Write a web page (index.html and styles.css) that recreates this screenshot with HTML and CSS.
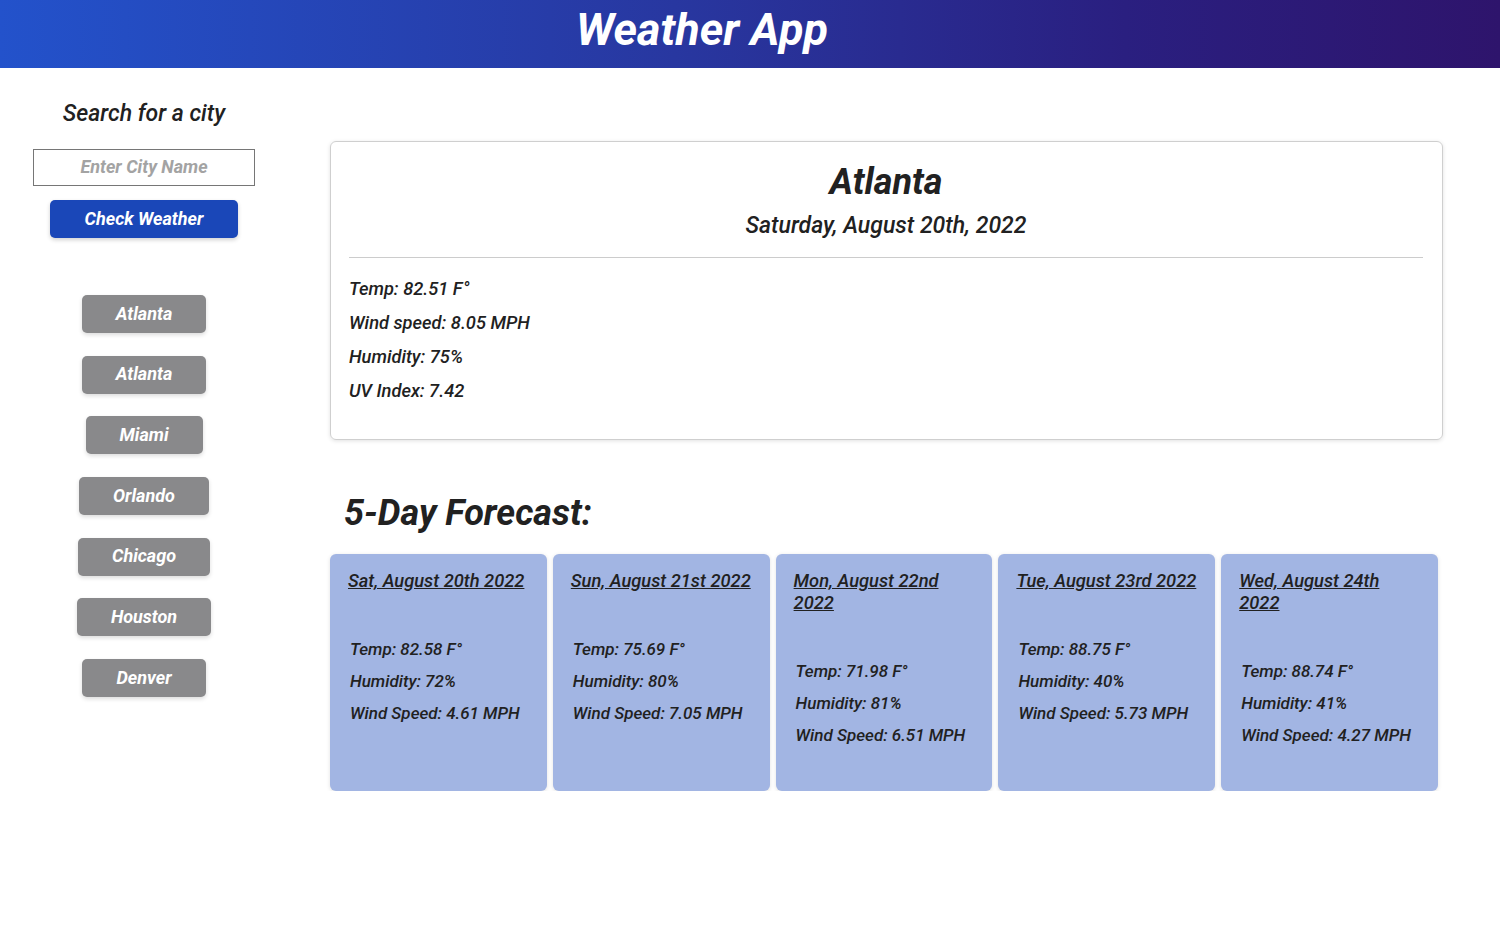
FILE: index.html
```html
<!DOCTYPE html>
<html lang="en">
<head>
<meta charset="utf-8">
<title>Weather App</title>
<link rel="stylesheet" href="styles.css">
</head>
<body>
<header class="topbar"><h1 class="app-title">Weather App</h1></header>
<div class="layout">
  <aside class="sidebar">
    <h2 class="search-title">Search for a city</h2>
    <input class="city-input" type="text" placeholder="Enter City Name">
    <button class="check-btn">Check Weather</button>
    <div class="history">
      <button class="city-btn">Atlanta</button>
      <button class="city-btn">Atlanta</button>
      <button class="city-btn">Miami</button>
      <button class="city-btn">Orlando</button>
      <button class="city-btn">Chicago</button>
      <button class="city-btn">Houston</button>
      <button class="city-btn">Denver</button>
    </div>
  </aside>
  <main class="content">
    <section class="current">
      <h2 class="city-name">Atlanta</h2>
      <h3 class="current-date">Saturday, August 20th, 2022</h3>
      <hr class="divider">
      <p class="stat">Temp: 82.51 F°</p>
      <p class="stat">Wind speed: 8.05 MPH</p>
      <p class="stat">Humidity: 75%</p>
      <p class="stat">UV Index: 7.42</p>
    </section>
    <h2 class="forecast-title">5-Day Forecast:</h2>
    <div class="forecast">
      <div class="day">
        <h4 class="day-date">Sat, August 20th 2022</h4>
        <p class="day-stat">Temp: 82.58 F°</p>
        <p class="day-stat">Humidity: 72%</p>
        <p class="day-stat">Wind Speed: 4.61 MPH</p>
      </div>
      <div class="day">
        <h4 class="day-date">Sun, August 21st 2022</h4>
        <p class="day-stat">Temp: 75.69 F°</p>
        <p class="day-stat">Humidity: 80%</p>
        <p class="day-stat">Wind Speed: 7.05 MPH</p>
      </div>
      <div class="day">
        <h4 class="day-date">Mon, August 22nd 2022</h4>
        <p class="day-stat">Temp: 71.98 F°</p>
        <p class="day-stat">Humidity: 81%</p>
        <p class="day-stat">Wind Speed: 6.51 MPH</p>
      </div>
      <div class="day">
        <h4 class="day-date">Tue, August 23rd 2022</h4>
        <p class="day-stat">Temp: 88.75 F°</p>
        <p class="day-stat">Humidity: 40%</p>
        <p class="day-stat">Wind Speed: 5.73 MPH</p>
      </div>
      <div class="day">
        <h4 class="day-date">Wed, August 24th 2022</h4>
        <p class="day-stat">Temp: 88.74 F°</p>
        <p class="day-stat">Humidity: 41%</p>
        <p class="day-stat">Wind Speed: 4.27 MPH</p>
      </div>
    </div>
  </main>
</div>
</body>
</html>
```
FILE: styles.css
```css
* { box-sizing: border-box; }
body {
  margin: 0;
  font-family: Roboto, "Liberation Sans", sans-serif;
  font-style: italic;
  color: #212121;
  background: #fff;
}
.topbar {
  height: 68px;
  background: linear-gradient(90deg, #2352cb 0%, #2837a0 45%, #2a1f80 75%, #2e146c 100%);
  display: flex;
  align-items: center;
  justify-content: center;
  padding-right: 96px;
  padding-bottom: 10px;
}
.app-title {
  margin: 0;
  color: #fff;
  font-size: 45px;
  font-weight: 700;
  font-style: italic;
  line-height: 1;
}
.layout {
  display: flex;
  align-items: flex-start;
}
.sidebar {
  width: 288px;
  flex: none;
  display: flex;
  flex-direction: column;
  align-items: center;
  padding-top: 32px;
}
.search-title {
  margin: 0;
  font-size: 23px;
  line-height: 28px;
  font-weight: 500;
}
.city-input {
  margin-top: 21px;
  width: 222px;
  height: 37px;
  border: 1px solid #767676;
  font-family: inherit;
  font-style: italic;
  font-weight: 700;
  font-size: 18px;
  text-align: center;
  padding: 0 8px 2px;
  outline: none;
}
.city-input::placeholder { color: #a3a3a3; }
.check-btn {
  margin-top: 14px;
  width: 188px;
  height: 38px;
  border: none;
  border-radius: 5px;
  background: #1a47b8;
  color: #fff;
  font-family: inherit;
  font-style: italic;
  font-weight: 700;
  font-size: 18px;
  padding-bottom: 2px;
  box-shadow: 0 2px 4px rgba(0,0,0,0.18);
}
.history {
  margin-top: 57px;
  display: flex;
  flex-direction: column;
  align-items: center;
  gap: 22.7px;
}
.city-btn {
  height: 38px;
  padding: 0 34px 2px;
  border: none;
  border-radius: 5px;
  background: #89898b;
  color: #fff;
  font-family: inherit;
  font-style: italic;
  font-weight: 700;
  font-size: 18px;
  box-shadow: 0 2px 4px rgba(0,0,0,0.14);
}
.content {
  margin-left: 42px;
  width: 1113px;
  padding-top: 73px;
}
.current {
  border: 1px solid #cfcfcf;
  border-radius: 6px;
  box-shadow: 0 1px 4px rgba(0,0,0,0.12);
  padding: 18px 19px 30px 18px;
  height: 299px;
}
.city-name {
  margin: 0;
  text-align: center;
  font-size: 36px;
  line-height: 44px;
  font-weight: 700;
}
.current-date {
  margin: 0;
  text-align: center;
  font-size: 23px;
  line-height: 44px;
  font-weight: 500;
}
.divider {
  margin: 9px 0 14px;
  border: none;
  border-top: 1px solid #cccccc;
}
.stat {
  margin: 0;
  font-size: 18.3px;
  line-height: 34px;
  font-weight: 500;
}
.forecast-title {
  margin: 51px 0 0 14px;
  font-size: 36px;
  line-height: 44px;
  font-weight: 700;
}
.forecast {
  margin-top: 19px;
  display: flex;
  gap: 6px;
  width: 1108px;
}
.day {
  flex: 1;
  height: 237px;
  background: #a2b5e3;
  border-radius: 6px;
  box-shadow: 0 1px 4px rgba(0,0,0,0.12);
  padding: 16px 18px;
}
.day-date {
  margin: 0 0 41px;
  font-size: 18.3px;
  line-height: 22px;
  font-weight: 500;
  text-decoration: underline;
}
.day-stat {
  margin: 0;
  padding-left: 2px;
  font-size: 17px;
  line-height: 32px;
  font-weight: 500;
}
```
